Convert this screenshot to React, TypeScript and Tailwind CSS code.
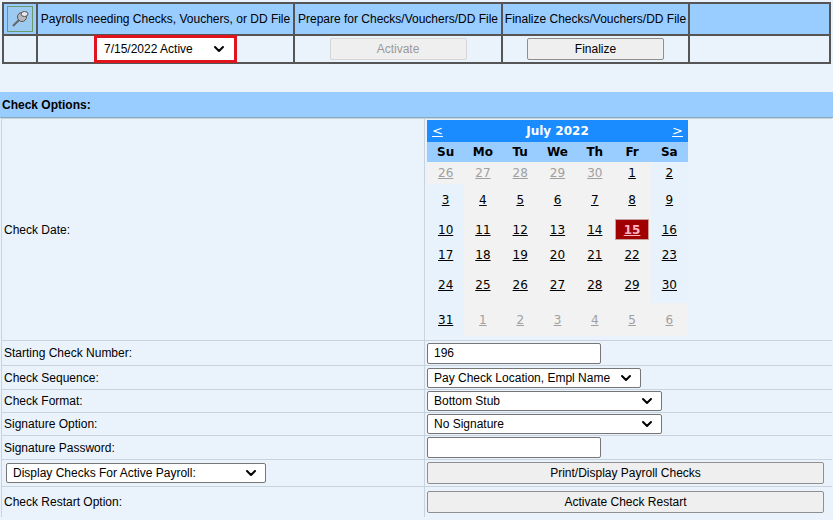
import { ChevronDown } from "lucide-react";

const font = { fontFamily: '"Liberation Sans", Arial, sans-serif' };

const Select = ({ label, w }: { label: string; w: string }) => (
  <div className={`${w} h-[20px] bg-white border border-[#767676] rounded-[2px] flex items-center justify-between px-[6px] text-[12px] text-black`}>
    <span>{label}</span>
    <ChevronDown className="w-4 h-4" strokeWidth={3} />
  </div>
);

const GrayBtn = ({ label, w, disabled }: { label: string; w: string; disabled?: boolean }) => (
  <div className={`${w} h-[22px] border rounded-[2px] flex items-center justify-center text-[12px] ${disabled ? "bg-[#efefef] border-[#d6d6d6] text-[#9a9a9a]" : "bg-[#efefef] border-[#8f8f8f] text-black"}`}>
    {label}
  </div>
);

const weeks = [
  [26, 27, 28, 29, 30, 1, 2],
  [3, 4, 5, 6, 7, 8, 9],
  [10, 11, 12, 13, 14, 15, 16],
  [17, 18, 19, 20, 21, 22, 23],
  [24, 25, 26, 27, 28, 29, 30],
  [31, 1, 2, 3, 4, 5, 6],
];
const rowH = ["h-[22px]", "h-[32px]", "h-[27px]", "h-[23px]", "h-[37px]", "h-[33px]"];

const Calendar = () => (
  <div className="w-[261px] text-[13px] font-bold" style={{ fontFamily: '"DejaVu Sans", Verdana, sans-serif' }}>
    <div className="h-[22px] bg-[#1a8cff] text-white flex items-center justify-between px-[5px]">
      <span className="underline font-normal">&lt;</span>
      <span className="text-[12px]">July 2022</span>
      <span className="underline font-normal">&gt;</span>
    </div>
    <div className="h-[20px] bg-[#99ccff] grid grid-cols-7 items-center text-center text-[12px] text-black">
      {["Su", "Mo", "Tu", "We", "Th", "Fr", "Sa"].map((d) => (
        <span key={d}>{d}</span>
      ))}
    </div>
    {weeks.map((wk, r) => (
      <div key={r} className={`grid grid-cols-7 ${rowH[r]}`}>
        {wk.map((d, c) => {
          const other = (r === 0 && c < 5) || (r === 5 && c > 0);
          const weekend = !other && (c === 0 || c === 6);
          const sel = r === 2 && c === 5;
          return (
            <div
              key={c}
              className={`flex items-center justify-center text-[12px] font-normal ${weekend ? "bg-[#e8f2fc]" : "bg-[#f2f2f2]"}`}
            >
              {sel ? (
                <span className="bg-[#a00000] text-[#ffb3c6] font-bold underline w-[34px] h-[21px] flex items-center justify-center border border-[#c8a0a0]">
                  {d}
                </span>
              ) : (
                <span className={`underline ${other ? "text-[#a0a0a0]" : "text-black"}`}>{d}</span>
              )}
            </div>
          );
        })}
      </div>
    ))}
  </div>
);

const Row = ({ label, h, children }: { label: React.ReactNode; h: string; children: React.ReactNode }) => (
  <div className={`flex ${h} border-t border-[#c9d3dd]`}>
    <div className="w-[424px] border-l border-r border-[#c9d3dd] flex items-center pl-[2px] text-[12px] text-black">{label}</div>
    <div className="flex-1 flex items-center pl-[2px]">{children}</div>
  </div>
);

export default function App() {
  return (
    <div className="w-[833px] h-[520px] bg-[#eaf3fc] overflow-hidden" style={font}>
      <div className="pt-[2px] px-[2px]">
        <div className="border border-[#555] bg-[#555] grid grid-cols-[32px_255px_206px_185px_1fr] gap-[2px] p-[1px]">
          <div className="h-[30px] bg-[#99ccff] flex items-center justify-center">
            <div className="w-[26px] h-[26px] border border-[#6a9a6a] bg-[#9ccaf0] flex items-center justify-center">
              <svg width="20" height="20" viewBox="0 0 20 20">
                <path d="M3 17 L9 11" stroke="#666" strokeWidth="2" />
                <circle cx="12" cy="8" r="4.5" fill="#b8b8c0" stroke="#555" />
                <ellipse cx="14.5" cy="5" rx="3.5" ry="2.5" fill="#e8e8f0" stroke="#555" />
              </svg>
            </div>
          </div>
          {["Payrolls needing Checks, Vouchers, or DD File", "Prepare for Checks/Vouchers/DD File", "Finalize Checks/Vouchers/DD File", ""].map((t, i) => (
            <div key={i} className="h-[30px] bg-[#99ccff] flex items-center justify-center text-[12px] text-black whitespace-nowrap">{t}</div>
          ))}
          <div className="h-[26px] bg-[#eaf3fc]" />
          <div className="h-[26px] bg-[#eaf3fc] flex items-center justify-center">
            <div className="border-[3px] border-[#e0141e] p-[1px] bg-white">
              <Select label="7/15/2022 Active" w="w-[135px] border-0" />
            </div>
          </div>
          <div className="h-[26px] bg-[#eaf3fc] flex items-center justify-center">
            <GrayBtn label="Activate" w="w-[137px]" disabled />
          </div>
          <div className="h-[26px] bg-[#eaf3fc] flex items-center justify-center">
            <GrayBtn label="Finalize" w="w-[137px]" />
          </div>
          <div className="h-[26px] bg-[#eaf3fc]" />
        </div>
      </div>
      <div className="h-[28px]" />
      <div className="h-[26px] bg-[#99ccff] flex items-center pl-[2px] text-[12px] font-bold text-black border-b border-[#8ab]">Check Options:</div>
      <div className="mx-[1px]">
        <div className="flex h-[222px] border-t border-[#c9d3dd]">
          <div className="w-[424px] border-l border-r border-[#c9d3dd] flex items-center pl-[2px] text-[12px] text-black">Check Date:</div>
          <div className="flex-1 pt-[1px] pl-[2px]"><Calendar /></div>
        </div>
        <Row label="Starting Check Number:" h="h-[25px]">
          <div className="w-[174px] h-[21px] bg-white border border-[#767676] rounded-[2px] text-[12px] flex items-center px-[6px]">196</div>
        </Row>
        <Row label="Check Sequence:" h="h-[24px]"><Select label="Pay Check Location, Empl Name" w="w-[214px]" /></Row>
        <Row label="Check Format:" h="h-[23px]"><Select label="Bottom Stub" w="w-[235px]" /></Row>
        <Row label="Signature Option:" h="h-[23px]"><Select label="No Signature" w="w-[235px]" /></Row>
        <Row label="Signature Password:" h="h-[24px]">
          <div className="w-[174px] h-[21px] bg-white border border-[#767676] rounded-[2px]" />
        </Row>
        <Row label={<Select label="Display Checks For Active Payroll:" w="w-[260px] ml-[2px]" />} h="h-[27px]">
          <GrayBtn label="Print/Display Payroll Checks" w="w-[397px]" />
        </Row>
        <Row label="Check Restart Option:" h="h-[31px]">
          <GrayBtn label="Activate Check Restart" w="w-[397px]" />
        </Row>
      </div>
    </div>
  );
}
